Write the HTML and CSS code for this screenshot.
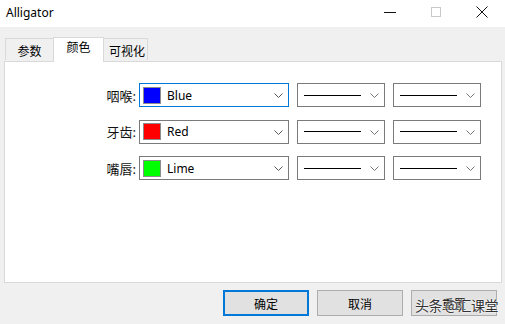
FILE: index.html
```html
<!DOCTYPE html>
<html>
<head>
<meta charset="utf-8">
<link rel="stylesheet" href="styles.css">
</head>
<body>
<div class="window">
  <div class="titlebar">
    <span class="title">Alligator</span>
    <div class="winctl">
      <span class="ctl"><svg width="12" height="12" viewBox="0 0 12 12"><path d="M0 6.5H12" stroke="#111" stroke-width="1"/></svg></span>
      <span class="ctl"><svg width="12" height="12" viewBox="0 0 12 12"><rect x="1.5" y="1.5" width="9" height="9" fill="none" stroke="#c8c8c8" stroke-width="1"/></svg></span>
      <span class="ctl"><svg width="12" height="12" viewBox="0 0 12 12"><path d="M0.5 0.5L11.5 11.5M11.5 0.5L0.5 11.5" stroke="#111" stroke-width="1"/></svg></span>
    </div>
  </div>
  <div class="body">
    <div class="tabs">
      <div class="tab">参数</div>
      <div class="tab active">颜色</div>
      <div class="tab">可视化</div>
    </div>
    <div class="panel">
      <div class="row">
        <label class="lbl">咽喉:</label>
        <div class="combo color focus"><span class="sw" style="background:#0000ff"></span><span class="txt">Blue</span><svg class="chev" width="9" height="5" viewBox="0 0 9 5"><path d="M0.5 0.5L4.5 4.5L8.5 0.5" fill="none" stroke="#555" stroke-width="1"/></svg></div>
        <div class="combo small"><span class="line"></span><svg class="chev" width="9" height="5" viewBox="0 0 9 5"><path d="M0.5 0.5L4.5 4.5L8.5 0.5" fill="none" stroke="#777" stroke-width="1"/></svg></div>
        <div class="combo small"><span class="line"></span><svg class="chev" width="9" height="5" viewBox="0 0 9 5"><path d="M0.5 0.5L4.5 4.5L8.5 0.5" fill="none" stroke="#777" stroke-width="1"/></svg></div>
      </div>
      <div class="row">
        <label class="lbl">牙齿:</label>
        <div class="combo color"><span class="sw" style="background:#ff0000"></span><span class="txt">Red</span><svg class="chev" width="9" height="5" viewBox="0 0 9 5"><path d="M0.5 0.5L4.5 4.5L8.5 0.5" fill="none" stroke="#555" stroke-width="1"/></svg></div>
        <div class="combo small"><span class="line"></span><svg class="chev" width="9" height="5" viewBox="0 0 9 5"><path d="M0.5 0.5L4.5 4.5L8.5 0.5" fill="none" stroke="#777" stroke-width="1"/></svg></div>
        <div class="combo small"><span class="line"></span><svg class="chev" width="9" height="5" viewBox="0 0 9 5"><path d="M0.5 0.5L4.5 4.5L8.5 0.5" fill="none" stroke="#777" stroke-width="1"/></svg></div>
      </div>
      <div class="row">
        <label class="lbl">嘴唇:</label>
        <div class="combo color"><span class="sw" style="background:#00ff00"></span><span class="txt">Lime</span><svg class="chev" width="9" height="5" viewBox="0 0 9 5"><path d="M0.5 0.5L4.5 4.5L8.5 0.5" fill="none" stroke="#555" stroke-width="1"/></svg></div>
        <div class="combo small"><span class="line"></span><svg class="chev" width="9" height="5" viewBox="0 0 9 5"><path d="M0.5 0.5L4.5 4.5L8.5 0.5" fill="none" stroke="#777" stroke-width="1"/></svg></div>
        <div class="combo small"><span class="line"></span><svg class="chev" width="9" height="5" viewBox="0 0 9 5"><path d="M0.5 0.5L4.5 4.5L8.5 0.5" fill="none" stroke="#777" stroke-width="1"/></svg></div>
      </div>
    </div>
    <div class="buttons">
      <button class="btn default">确定</button>
      <button class="btn">取消</button>
      <button class="btn">重置</button>
    </div>
  </div>
  <div class="watermark">头条 @汇课堂</div>
</div>
</body>
</html>
```
FILE: styles.css
```css
* { box-sizing: border-box; }
html, body { margin: 0; padding: 0; }
body {
  width: 505px;
  height: 324px;
  overflow: hidden;
  background: #f0f0f0;
  font-family: "Noto Sans", "Noto Sans CJK SC", sans-serif;
  font-size: 12px;
  color: #000;
}
.window { position: relative; width: 505px; height: 324px; }
.titlebar {
  height: 27px;
  background: #fff;
  display: flex;
  align-items: center;
  justify-content: space-between;
}
.title { padding-left: 6px; font-size: 12px; line-height: 14px; margin-top: -2px; }
.winctl { display: flex; height: 27px; }
.ctl {
  width: 46px;
  display: flex;
  align-items: center;
  justify-content: center;
  margin-top: -3px;
}
.body { padding: 9px 0 0 4px; }
.tabs {
  display: flex;
  align-items: flex-end;
  height: 25px;
  padding-left: 1px;
}
.tab {
  height: 22px;
  border: 1px solid #d9d9d9;
  border-bottom: none;
  background: #f0f0f0;
  display: flex;
  align-items: center;
  justify-content: center;
  font-size: 12px;
  padding-top: 3px;
  margin-bottom: 1px;
}
.tab:first-child { width: 48px; border-right: none; }
.tab.active {
  width: 51px;
  height: 25px;
  background: #fff;
  margin-bottom: -1px;
  position: relative;
  z-index: 1;
  padding-top: 0;
  padding-bottom: 6px;
}
.tab:last-child { width: 44px; border-left: none; padding-left: 3px; }
.panel {
  width: 498px;
  height: 222px;
  background: #fff;
  border: 1px solid #d9d9d9;
  padding: 21px 0 0 0;
  display: flex;
  flex-direction: column;
  gap: 12.5px;
}
.row { display: flex; align-items: center; height: 24px; }
.lbl {
  width: 131px;
  margin-right: 3px;
  text-align: right;
  font-size: 13px;
  color: #111;
}
.combo {
  height: 24px;
  border: 1px solid #7a7a7a;
  background: #fff;
  display: flex;
  align-items: center;
  position: relative;
}
.combo.color { width: 150px; margin-right: 8px; padding-left: 3px; }
.combo.focus { border-color: #0078d7; }
.combo.small { width: 88px; margin-right: 8px; padding-left: 6px; }
.sw {
  width: 18px;
  height: 17px;
  border: 1px solid #8c8c8c;
  margin-right: 6px;
}
.txt { font-size: 12px; flex: 1; }
.line { width: 57px; height: 1px; background: #000; flex: none; }
.chev { position: absolute; right: 5px; top: 9px; }
.buttons {
  display: flex;
  justify-content: flex-end;
  gap: 8px;
  padding-right: 8px;
  margin-top: 7px;
}
.btn {
  width: 86px;
  height: 26px;
  background: #e1e1e1;
  border: 1px solid #adadad;
  font-family: "Noto Sans CJK SC", "Noto Sans", sans-serif;
  font-size: 12px;
  color: #000;
  padding: 0;
}
.btn.default { border: 2px solid #0078d7; }
.watermark {
  position: absolute;
  left: 415px;
  top: 296px;
  font-family: "Noto Sans CJK SC", sans-serif;
  font-size: 14px;
  line-height: 18px;
  color: #333;
  letter-spacing: -0.5px;
  text-shadow: 0 0 2px #fff, 0 0 2px #fff;
  white-space: nowrap;
}
```
